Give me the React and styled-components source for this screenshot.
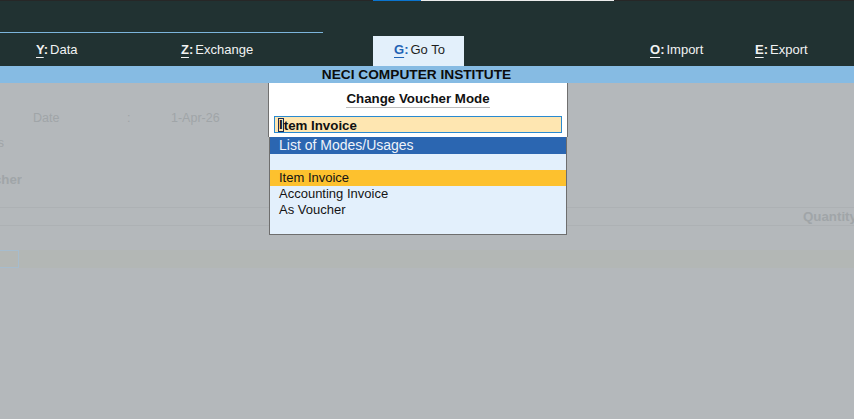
import React from 'react'
import styled, { createGlobalStyle } from 'styled-components'

const GlobalStyle = createGlobalStyle`
  html, body {
    margin: 0;
    padding: 0;
    background: #b4b8bb;
    font-family: "Liberation Sans", Arial, sans-serif;
    overflow: hidden;
  }
  #root {
    height: 419px;
  }
`

const Page = styled.div`
  width: 854px;
  height: 419px;
  display: flex;
  flex-direction: column;
  overflow: hidden;
`

// thin window strip above the header, with the active tab underline
const TopStrip = styled.div`
  height: 1px;
  display: flex;
  background: #272727;
`

const StripPart = styled.div`
  flex-shrink: 0;
  width: ${p => p.w}px;
  background: ${p => p.bg || 'transparent'};
`

const Header = styled.div`
  height: 65px;
  background: #213232;
  padding-top: 31px;
  box-sizing: border-box;
`

const HeaderRule = styled.div`
  width: 323px;
  height: 1px;
  background: #7cb5dc;
`

const MenuBar = styled.div`
  margin-top: 3px;
  height: 30px;
  display: flex;
  align-items: stretch;
  padding-left: 36px;
`

const MenuItem = styled.div`
  flex-shrink: 0;
  width: ${p => p.w}px;
  padding-left: ${p => p.pad || 0}px;
  padding-bottom: 3px;
  box-sizing: border-box;
  display: flex;
  align-items: center;
  font-size: 13px;
  color: ${p => (p.active ? '#1e1e1e' : '#f2f2f2')};
  background: ${p => (p.active ? '#e3f0fb' : 'transparent')};
  white-space: nowrap;
`

const Key = styled.span`
  font-weight: bold;
  margin-right: 2px;
  color: ${p => (p.active ? '#1f63b4' : '#f2f2f2')};

  u {
    text-underline-offset: 3px;
  }
`

const CompanyBand = styled.div`
  height: 17px;
  background: #86bbe3;
  display: flex;
  align-items: center;
  justify-content: center;
  padding-right: 21px;
  font-weight: bold;
  font-size: 13.7px;
  color: #0c0c0c;
`

const Body = styled.div`
  position: relative;
  flex: 1;
  display: flex;
  flex-direction: column;
  color: #a0a5a8;
  font-size: 12.5px;
`

const Row = styled.div`
  margin-top: ${p => p.gap || 0}px;
  height: ${p => p.h || 16}px;
  line-height: ${p => p.h || 16}px;
`

const DateRow = styled(Row)`
  display: grid;
  grid-template-columns: 94px 44px auto;
  padding-left: 33px;
`

// a label whose start is scrolled off the left edge
const Clip = styled.div`
  width: ${p => p.w}px;
  overflow: hidden;
  display: flex;
  justify-content: flex-end;
  white-space: nowrap;
  font-weight: ${p => (p.bold ? 'bold' : 'normal')};
  font-size: ${p => (p.bold ? 13.3 : 12.5)}px;
`

const TableHead = styled.div`
  margin-top: 19px;
  height: 17px;
  border-top: 1px solid #adb1b4;
  border-bottom: 1px solid #adb1b4;
  display: grid;
  grid-template-columns: 1fr 51px;
  align-items: center;
  font-weight: bold;
  font-size: 13.3px;
  white-space: nowrap;
  overflow: hidden;
`

const EntryStrip = styled.div`
  margin-top: 24px;
  height: 18px;
  background: #b3b7b5;
  display: flex;
`

const EntryBox = styled.div`
  width: 19px;
  box-sizing: border-box;
  border: 1px solid #a6bccd;
  border-left: none;
`

const Dialog = styled.div`
  position: absolute;
  left: 268px;
  top: 0;
  width: 300px;
  display: flex;
  flex-direction: column;
`

const DialogTop = styled.div`
  height: 54px;
  background: #ffffff;
  border-left: 1px solid #707070;
  border-right: 1px solid #707070;
  display: flex;
  flex-direction: column;
  align-items: center;
  padding-top: 8px;
  box-sizing: border-box;
`

const DialogTitle = styled.div`
  font-weight: bold;
  font-size: 13.3px;
  line-height: 16px;
  color: #111;
  border-bottom: 1px solid #bdbdbd;
`

const Field = styled.div`
  align-self: stretch;
  margin: 8px 5px 0;
  height: 17px;
  box-sizing: border-box;
  border: 1px solid #2a8ad0;
  background: #fee6b1;
  display: flex;
  align-items: center;
  padding-left: 4px;
  padding-top: 1px;
  font-weight: bold;
  font-size: 13.3px;
  color: #111;
`

const Caret = styled.span`
  display: inline-block;
  height: 12px;
  line-height: 12px;
  outline: 1px solid #1a2b55;
  margin-right: 1px;
`

const ListPanel = styled.div`
  margin-left: 1px;
  width: 298px;
  height: 98px;
  box-sizing: border-box;
  border: 1px solid #6e6e6e;
  border-top: none;
  background: #e3f0fc;
  font-size: 13px;
  color: #141414;
`

const ListHeader = styled.div`
  height: 17px;
  line-height: 17px;
  background: #2b66b1;
  color: #eef3fa;
  font-size: 14px;
  padding-left: 9px;
`

const ListItem = styled.div`
  height: 16px;
  line-height: 16px;
  padding-left: 9px;
  background: ${p => (p.selected ? '#fdc12e' : 'transparent')};
`

const menu = [
  { key: 'Y', label: 'Data', w: 145 },
  { key: 'Z', label: 'Exchange', w: 192 },
  { key: 'G', label: 'Go To', w: 91, pad: 21, active: true },
  { key: 'O', label: 'Import', w: 291, pad: 186 },
  { key: 'E', label: 'Export', w: 99 }
]

const modes = ['', 'Item Invoice', 'Accounting Invoice', 'As Voucher', '']

const App = () => {
  return (
    <Page>
      <GlobalStyle />
      <TopStrip>
        <StripPart w={373} />
        <StripPart w={48} bg="#0a74cf" />
        <StripPart w={193} bg="#ececec" />
      </TopStrip>
      <Header>
        <HeaderRule />
        <MenuBar>
          {menu.map(m => (
            <MenuItem key={m.key} w={m.w} pad={m.pad} active={m.active}>
              <Key active={m.active}>
                <u>{m.key}</u>:
              </Key>
              {m.label}
            </MenuItem>
          ))}
        </MenuBar>
      </Header>
      <CompanyBand>NECI COMPUTER INSTITUTE</CompanyBand>
      <Body>
        <DateRow gap={27}>
          <span>Date</span>
          <span>:</span>
          <span>1-Apr-26</span>
        </DateRow>
        <Row gap={9}>
          <Clip w={4}>Details</Clip>
        </Row>
        <Row gap={21}>
          <Clip w={22} bold>
            Voucher
          </Clip>
        </Row>
        <TableHead>
          <span />
          <span>Quantity</span>
        </TableHead>
        <EntryStrip>
          <EntryBox />
        </EntryStrip>

        <Dialog>
          <DialogTop>
            <DialogTitle>Change Voucher Mode</DialogTitle>
            <Field>
              <Caret>I</Caret>tem Invoice
            </Field>
          </DialogTop>
          <ListPanel>
            <ListHeader>List of Modes/Usages</ListHeader>
            {modes.map((m, i) => (
              <ListItem key={i} selected={m === 'Item Invoice'}>
                {m}
              </ListItem>
            ))}
          </ListPanel>
        </Dialog>
      </Body>
    </Page>
  )
}

export default App
